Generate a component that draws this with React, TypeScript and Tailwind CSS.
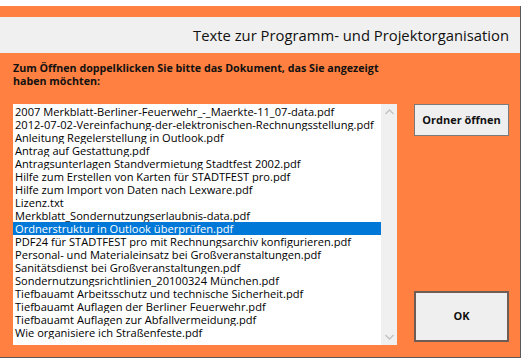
import { useState } from 'react'

const files = [
  '2007 Merkblatt-Berliner-Feuerwehr_-_Maerkte-11_07-data.pdf',
  '2012-07-02-Vereinfachung-der-elektronischen-Rechnungsstellung.pdf',
  'Anleitung Regelerstellung in Outlook.pdf',
  'Antrag auf Gestattung.pdf',
  'Antragsunterlagen Standvermietung Stadtfest 2002.pdf',
  'Hilfe zum Erstellen von Karten für STADTFEST pro.pdf',
  'Hilfe zum Import von Daten nach Lexware.pdf',
  'Lizenz.txt',
  'Merkblatt_Sondernutzungserlaubnis-data.pdf',
  'Ordnerstruktur in Outlook überprüfen.pdf',
  'PDF24 für STADTFEST pro mit Rechnungsarchiv konfigurieren.pdf',
  'Personal- und Materialeinsatz bei Großveranstaltungen.pdf',
  'Sanitätsdienst bei Großveranstaltungen.pdf',
  'Sondernutzungsrichtlinien_20100324 München.pdf',
  'Tiefbauamt Arbeitsschutz und technische Sicherheit.pdf',
  'Tiefbauamt Auflagen der Berliner Feuerwehr.pdf',
  'Tiefbauamt Auflagen zur Abfallvermeidung.pdf',
  'Wie organisiere ich Straßenfeste.pdf',
]

const font = { fontFamily: '"Open Sans", "Noto Sans", sans-serif' }

export default function App() {
  const [selected, setSelected] = useState(9)

  return (
    <div className="w-[524px] h-[359px] bg-white overflow-hidden pt-[6px]" style={font}>
      <div className="w-[521px] h-[352px] bg-[#ff8040] border-r border-b border-[#5a5a5a] pt-[11px]">
        <div className="h-[36px] bg-[#f0f0f0] flex items-center justify-end pr-[11px]">
          <span className="text-[14.8px] font-normal text-[#111]">
            Texte zur Programm- und Projektorganisation
          </span>
        </div>

        <p className="mt-[9px] ml-[13px] w-[380px] text-[10.7px] leading-[13px] font-bold text-[#111]">
          Zum Öffnen doppelklicken Sie bitte das Dokument, das Sie angezeigt haben möchten:
        </p>

        <div className="flex mt-[16px] ml-[13px]">
          <div className="w-[384px] h-[241px] bg-white flex">
            <ul className="flex-1 pt-[1px] text-[11.1px] leading-[13px] text-black">
              {files.map((f, i) => (
                <li
                  key={f}
                  onClick={() => setSelected(i)}
                  className={
                    'pl-[2px] h-[13px] whitespace-nowrap overflow-hidden ' +
                    (i === selected ? 'bg-[#0078d7] text-white' : '')
                  }
                >
                  {f}
                </li>
              ))}
            </ul>
            <div className="w-[16px] bg-[#f0f0f0] flex flex-col justify-between items-center py-[5px]">
              <svg width="9" height="6" viewBox="0 0 9 6">
                <path d="M0.5 5 L4.5 1 L8.5 5" fill="none" stroke="#c2c2c2" strokeWidth="1.3" />
              </svg>
              <svg width="9" height="6" viewBox="0 0 9 6">
                <path d="M0.5 1 L4.5 5 L8.5 1" fill="none" stroke="#c2c2c2" strokeWidth="1.3" />
              </svg>
            </div>
          </div>

          <div className="ml-[17px] w-[95px] flex flex-col justify-between">
            <button className="h-[32px] bg-[#efefef] border border-[#7a7a7a] text-[11px] font-bold text-[#111]">
              Ordner öffnen
            </button>
            <button className="h-[51px] mb-[3px] bg-[#efefef] border-2 border-[#6e5c55] text-[11px] font-bold text-[#111]">
              OK
            </button>
          </div>
        </div>
      </div>
    </div>
  )
}
